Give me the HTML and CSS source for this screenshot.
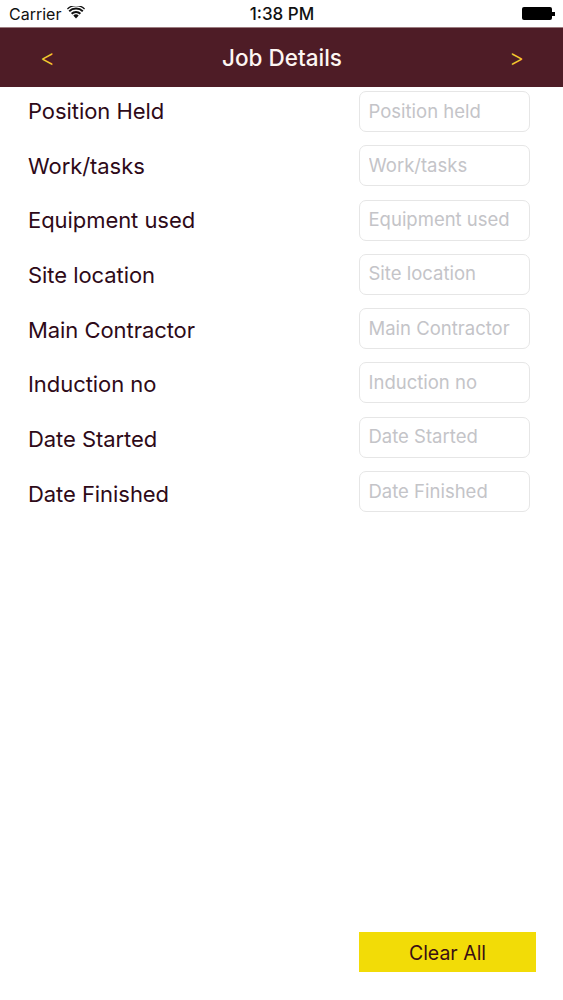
FILE: index.html
```html
<!DOCTYPE html>
<html lang="en">
<head>
<meta charset="utf-8">
<title>Job Details</title>
<link rel="stylesheet" href="styles.css">
</head>
<body>
<div class="screen">
  <header class="status">
    <div class="status-left">
      <span>Carrier</span>
      <svg class="wifi" viewBox="0 0 18 13" width="18" height="13"><path d="M9 12.6 6.3 9.6a3.8 3.8 0 0 1 5.4 0z" fill="#111"/><path d="M4.6 7.8a6.3 6.3 0 0 1 8.8 0" fill="none" stroke="#111" stroke-width="1.9"/><path d="M2.2 5.2a9.8 9.8 0 0 1 13.6 0" fill="none" stroke="#111" stroke-width="1.9"/><path d="M.4 2.9a12.8 12.8 0 0 1 17.2 0" fill="none" stroke="#111" stroke-width="1.3"/></svg>
    </div>
    <div class="status-time">1:38 PM</div>
    <div class="battery"><span class="battery-body"></span><span class="battery-tip"></span></div>
  </header>
  <nav class="navbar">
    <span class="nav-arrow">&lt;</span>
    <h1 class="nav-title">Job Details</h1>
    <span class="nav-arrow">&gt;</span>
  </nav>
  <main class="form">
    <div class="labels">
      <div class="label">Position Held</div>
      <div class="label">Work/tasks</div>
      <div class="label">Equipment used</div>
      <div class="label">Site location</div>
      <div class="label">Main Contractor</div>
      <div class="label">Induction no</div>
      <div class="label">Date Started</div>
      <div class="label">Date Finished</div>
    </div>
    <div class="fields">
      <input class="field" placeholder="Position held">
      <input class="field" placeholder="Work/tasks">
      <input class="field" placeholder="Equipment used">
      <input class="field" placeholder="Site location">
      <input class="field" placeholder="Main Contractor">
      <input class="field" placeholder="Induction no">
      <input class="field" placeholder="Date Started">
      <input class="field" placeholder="Date Finished">
    </div>
  </main>
  <div class="actions"><button class="clear">Clear All</button></div>
</div>
</body>
</html>
```
FILE: styles.css
```css
* { box-sizing: border-box; }
html, body { margin: 0; padding: 0; background: #fff; }
body { font-family: Inter, "Liberation Sans", sans-serif; }
.screen { width: 563px; height: 1000px; display: flex; flex-direction: column; overflow: hidden; }
.status { height: 27px; flex: none; display: grid; grid-template-columns: 1fr auto 1fr; align-items: center; padding: 1px 8px 0 9px; font-size: 16px; color: #111; }
.status-left { display: flex; align-items: center; gap: 6px; }
.wifi { margin-top: -3px; }
.status-time { font-size: 17px; font-weight: 500; }
.battery { justify-self: end; display: flex; align-items: center; margin-top: -1px; }
.battery-body { width: 30px; height: 13px; background: #000; border-radius: 2px; }
.battery-tip { width: 3px; height: 4px; background: #000; }
.navbar { height: 60px; flex: none; background: #4e1c26; border-top: 1px solid #9c7d80; display: flex; align-items: center; justify-content: space-between; padding: 0 39px 0 40px; }
.nav-title { margin: 0; font-size: 22.5px; font-weight: 500; color: #fdf6f2; }
.nav-arrow { font-size: 23px; color: #f3c72e; font-weight: 300; }
.form { display: flex; justify-content: space-between; padding: 4px 33px 0 28px; }
.labels { display: flex; flex-direction: column; gap: 27.7px; }
.label { height: 27px; line-height: 27px; margin-top: 7px; margin-bottom: -7px; font-size: 22px; color: #2e0a18; white-space: nowrap; letter-spacing: -0.06px; }
.fields { display: flex; flex-direction: column; gap: 13.3px; }
.field { width: 171px; height: 41px; border: 1px solid #e6e6e6; border-radius: 7px; padding: 0 9px 2px 8.5px; font: 400 18.5px Inter, "Liberation Sans", sans-serif; background: #fff; outline: none; }
.field::placeholder { color: #c4c4c8; opacity: 1; }
.actions { margin-top: auto; display: flex; justify-content: flex-end; padding: 0 27px 28px 0; }
.clear { width: 177px; height: 40px; border: none; background: #f2dc07; color: #3a0f14; font: 400 19.5px Inter, "Liberation Sans", sans-serif; padding: 1px 0 0; }
```
